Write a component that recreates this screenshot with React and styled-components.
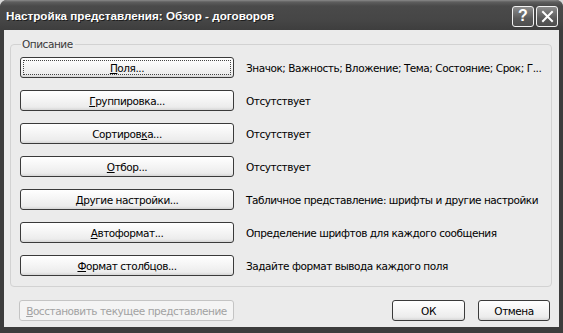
import React from "react";
import styled, { createGlobalStyle } from "styled-components";

const Global = createGlobalStyle`
  html, body { margin: 0; padding: 0; background: #d8d8d8; }
  body { width: 563px; height: 333px; overflow: hidden; }
`;

const Window = styled.div`
  width: 563px;
  height: 333px;
  box-sizing: border-box;
  display: flex;
  flex-direction: column;
  background: #3c3c3c;
  border-radius: 7px 7px 0 0;
  overflow: hidden;
  font-family: "DejaVu Sans", "Liberation Sans", sans-serif;
`;

const TitleBar = styled.div`
  height: 30px;
  flex: none;
  display: flex;
  align-items: center;
  justify-content: space-between;
  padding: 0 5px 0 6px;
  background: linear-gradient(to bottom, #8a8a8a 0px, #5e5e5e 2px, #4a4a4a 6px, #464646 20px, #3e3e3e 30px);
`;

const Title = styled.div`
  color: #fff;
  font-family: "Liberation Sans", Arial, sans-serif;
  font-weight: bold;
  font-size: 11.7px;
  text-shadow: 1px 1px 0 #1e1e1e;
  padding-top: 1px;
`;

const Caps = styled.div`
  display: flex;
  gap: 2px;
  padding-top: 2px;
`;

const CapButton = styled.div`
  width: 22px;
  height: 21px;
  box-sizing: border-box;
  border: 1px solid #f2f2f2;
  border-radius: 3px;
  background: linear-gradient(to bottom, #8c8c8c, #5a5a5a 60%, #4e4e4e);
  display: flex;
  align-items: center;
  justify-content: center;
  color: #fff;
  font-family: "Liberation Sans", Arial, sans-serif;
  font-weight: bold;
  font-size: 16px;
`;

const Body = styled.div`
  flex: 1;
  margin: 0 4px 6px 4px;
  background: #ebebeb;
  display: flex;
  flex-direction: column;
  padding: 8px 7px 0 6px;
`;

const Group = styled.fieldset`
  margin: 0;
  padding: 7px 0 0 9px;
  border: 1px solid #d2d2d2;
  border-radius: 4px;
  height: 249px;
  box-sizing: border-box;
  display: flex;
  flex-direction: column;
  gap: 12px;
`;

const Legend = styled.legend`
  padding: 0 2px 0 1px;
  margin-left: 1px;
  font-size: 10.5px;
  letter-spacing: -0.45px;
  color: #3a3a3a;
`;

const Row = styled.div`
  display: flex;
  align-items: center;
  gap: 12px;
  height: 21px;
`;

const Btn = styled.div`
  width: ${(p) => p.$w || 214}px;
  height: 21px;
  box-sizing: border-box;
  flex: none;
  position: relative;
  border: 1px solid ${(p) => (p.$disabled ? "#c4c4c4" : "#3a3a3a")};
  border-radius: 3px;
  background: ${(p) =>
    p.$disabled
      ? "#f4f4f4"
      : "linear-gradient(to bottom, #ffffff 0%, #f4f4f4 50%, #ececec 85%, #d6d6d6 100%)"};
  display: flex;
  align-items: center;
  justify-content: center;
  font-size: 10.5px;
  letter-spacing: -0.45px;
  color: ${(p) => (p.$disabled ? "#a2a2a2" : "#000")};
  ${(p) =>
    p.$focus &&
    `&::after {
      content: "";
      position: absolute;
      inset: 2px;
      border: 1px dotted #444;
    }`}
`;

const Desc = styled.div`
  font-size: 10.5px;
  letter-spacing: -0.45px;
  color: #000;
  white-space: nowrap;
`;

const Footer = styled.div`
  display: flex;
  align-items: center;
  gap: 13px;
  padding: 13px 2px 0 9px;
`;

const Spacer = styled.div`
  flex: 1;
`;

const rows = [
  { label: <><u>П</u>оля...</>, desc: "Значок; Важность; Вложение; Тема; Состояние; Срок; Г...", focus: true },
  { label: <><u>Г</u>руппировка...</>, desc: "Отсутствует" },
  { label: <>Сортиров<u>к</u>а...</>, desc: "Отсутствует" },
  { label: <><u>О</u>тбор...</>, desc: "Отсутствует" },
  { label: <><u>Д</u>ругие настройки...</>, desc: "Табличное представление: шрифты и другие настройки" },
  { label: <><u>А</u>втоформат...</>, desc: "Определение шрифтов для каждого сообщения" },
  { label: <><u>Ф</u>ормат столбцов...</>, desc: "Задайте формат вывода каждого поля" },
];

export default function App() {
  return (
    <>
      <Global />
      <Window>
        <TitleBar>
          <Title>Настройка представления: Обзор - договоров</Title>
          <Caps>
            <CapButton>?</CapButton>
            <CapButton>
              <svg width="13" height="13" viewBox="0 0 13 13">
                <path d="M2 2 L11 11 M11 2 L2 11" stroke="#fff" strokeWidth="2" strokeLinecap="square" />
              </svg>
            </CapButton>
          </Caps>
        </TitleBar>
        <Body>
          <Group>
            <Legend>Описание</Legend>
            {rows.map((r, i) => (
              <Row key={i}>
                <Btn $focus={r.focus}><span>{r.label}</span></Btn>
                <Desc>{r.desc}</Desc>
              </Row>
            ))}
          </Group>
          <Footer>
            <Btn $disabled $w={215}><span><u>В</u>осстановить текущее представление</span></Btn>
            <Spacer />
            <Btn $w={73}>ОК</Btn>
            <Btn $w={72}>Отмена</Btn>
          </Footer>
        </Body>
      </Window>
    </>
  );
}
